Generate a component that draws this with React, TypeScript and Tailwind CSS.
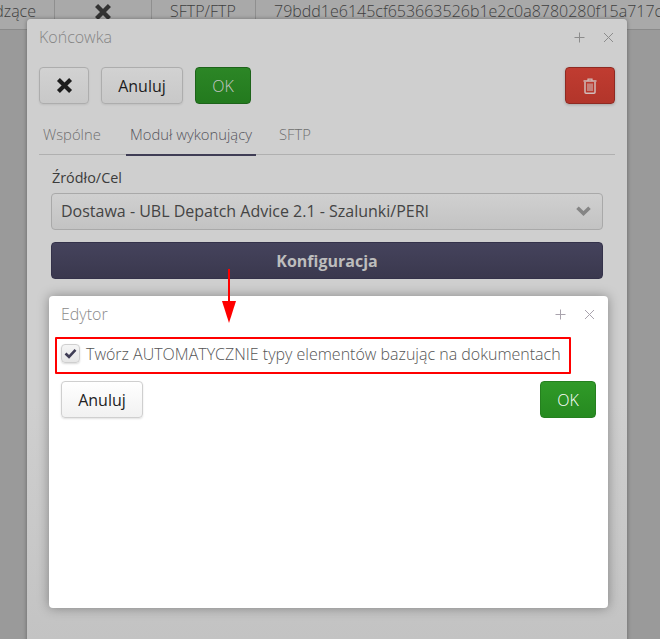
import React from "react";

const btn = "flex h-[37px] items-center justify-center rounded-[4px] border text-[16px]";

function Plus({ color }: { color: string }) {
  return (
    <svg width="11" height="11" viewBox="0 0 11 11" stroke={color} strokeWidth="1" fill="none">
      <path d="M5.5 0.5V10.5M0.5 5.5H10.5" />
    </svg>
  );
}
function Cross({ color }: { color: string }) {
  return (
    <svg width="11" height="11" viewBox="0 0 11 11" stroke={color} strokeWidth="1" fill="none">
      <path d="M1 1L10 10M10 1L1 10" />
    </svg>
  );
}
function BoldX({ size, color }: { size: number; color: string }) {
  return (
    <svg width={size} height={size} viewBox="0 0 14 14" stroke={color} strokeWidth="3.4" fill="none">
      <path d="M2 2L12 12M12 2L2 12" />
    </svg>
  );
}

export default function App() {
  return (
    <div className="relative h-[639px] w-[660px] overflow-hidden bg-[#9a9a9a] font-['Open_Sans',sans-serif]">
      <div className="flex h-[30px] overflow-hidden border-b border-[#8a8a8a] bg-[#a9a9a9] text-[16px] font-light leading-[22px] text-[#3f3f3f]">
        <div className="flex h-[29px] w-[55px] shrink-0 justify-end border-r border-[#8f8f8f] pr-[18px]">
          <span>dzące</span>
        </div>
        <div className="flex h-[29px] w-[97px] shrink-0 justify-center border-r border-[#8f8f8f] pt-[3px]">
          <BoldX size={18} color="#333" />
        </div>
        <div className="h-[29px] w-[104px] shrink-0 whitespace-nowrap border-r border-[#8f8f8f] pl-[18px]">SFTP/FTP</div>
        <div className="shrink-0 whitespace-nowrap pl-[18px]">79bdd1e6145cf653663526b1e2c0a8780280f15a717c</div>
      </div>

      <div className="absolute left-[27px] top-[19px] h-[640px] w-[600px] rounded-[4px] bg-gradient-to-b from-[#cfcfcf] from-60% to-[#c2c2c2] px-[12px] shadow-[0_0_4px_rgba(0,0,0,0.35)]">
        <div className="flex h-[36px] items-center justify-between pr-[1px]">
          <span className="text-[16px] font-light text-[#858585]">Końcowka</span>
          <div className="flex items-center gap-[18px]">
            <Plus color="#8c8c8c" />
            <Cross color="#8c8c8c" />
          </div>
        </div>

        <div className="mt-[12px] flex">
          <div className={`${btn} w-[50px] border-[#adadad] bg-gradient-to-b from-[#d2d2d2] to-[#c8c8c8] shadow-[0_1px_2px_rgba(0,0,0,0.08)]`}>
            <BoldX size={17} color="#1c1c1c" />
          </div>
          <div className={`${btn} ml-[12px] w-[82px] border-[#adadad] bg-gradient-to-b from-[#d2d2d2] to-[#c8c8c8] text-[#1c1c1c] shadow-[0_1px_2px_rgba(0,0,0,0.08)]`}>
            Anuluj
          </div>
          <div className={`${btn} ml-[12px] w-[56px] border-[#1d631a] bg-gradient-to-b from-[#2c8626] to-[#237a1e] font-light text-[#c6c6c6]`}>
            OK
          </div>
          <div className={`${btn} ml-auto w-[50px] border-[#8f2a22] bg-gradient-to-b from-[#c03c31] to-[#b2352a] shadow-[0_1px_3px_rgba(0,0,0,0.2)]`}>
            <svg width="14" height="16" viewBox="0 0 14 16" fill="none" stroke="#d0bdbb" strokeWidth="1.5">
              <path d="M0.5 3H13.5" />
              <path d="M5 3V1.2H9V3" strokeWidth="1.2" />
              <path d="M2 4V14.2C2 14.9 2.4 15.2 3 15.2H11C11.6 15.2 12 14.9 12 14.2V4" />
              <path d="M5 5.5V13M7 5.5V13M9 5.5V13" strokeWidth="1.1" />
            </svg>
          </div>
        </div>

        <div className="mt-[12px] flex h-[39px] border-b border-[#b0b0b0] text-[14.8px] font-light leading-[22px] text-[#707070]">
          <div className="flex w-[87px] items-start pl-[4px] pt-[7px]">Wspólne</div>
          <div className="-mb-px flex h-[40px] w-[130px] items-start justify-center whitespace-nowrap border-b-[2px] border-[#3f3d55] pt-[7px] text-[#55555c]">
            Moduł wykonujący
          </div>
          <div className="pl-[23px] pt-[7px]">SFTP</div>
        </div>

        <div className="px-[12px]">
          <div className="ml-[1px] mt-[13px] text-[14.4px] leading-[20px] text-[#3c3c3c]">Źródło/Cel</div>
          <div className="mt-[5px] flex h-[37px] items-center justify-between rounded-[4px] border border-[#a9a9a9] bg-gradient-to-b from-[#d0d0d0] to-[#c3c3c3] pb-[1px] pl-[9px] pr-[11px] text-[16px] text-[#444]">
            <span>Dostawa - UBL Depatch Advice 2.1 - Szalunki/PERI</span>
            <svg width="15" height="10" viewBox="0 0 15 10" fill="none" stroke="#858585" strokeWidth="3.6">
              <path d="M1.5 1.8L7.5 7.5L13.5 1.8" />
            </svg>
          </div>
          <div className="mt-[12px] flex h-[37px] items-center justify-center rounded-[4px] border border-[#34324a] bg-gradient-to-b from-[#45435c] to-[#3a384e] text-[16px] font-bold text-[#bdbdbd]">
            Konfiguracja
          </div>
        </div>

        <div className="ml-[10px] mt-[17px] h-[312px] w-[559px] rounded-[4px] bg-white px-[12px] shadow-[0_0_12px_rgba(0,0,0,0.35)]">
          <div className="flex h-[36px] items-center justify-between pr-[1px]">
            <span className="text-[16px] font-light text-[#8a8a8a]">Edytor</span>
            <div className="flex items-center gap-[18px]">
              <Plus color="#a9a3ad" />
              <Cross color="#a9a3ad" />
            </div>
          </div>
          <div className="-ml-[6px] mt-[5px] flex h-[37px] w-[516px] items-center rounded-[1px] border-[2px] border-[#ff0000] pb-[4px] pl-[4px]">
            <div className="flex h-[19px] w-[19px] items-center justify-center rounded-[4px] border border-[#cfcfcf] bg-gradient-to-b from-[#f5f5f5] to-[#e6e6e6] shadow-[0_1px_2px_rgba(0,0,0,0.15)]">
              <svg width="13" height="11" viewBox="0 0 13 11" fill="none" stroke="#3f3d55" strokeWidth="2.6">
                <path d="M1.5 5.5L5 8.8L11.5 1.8" />
              </svg>
            </div>
            <span className="ml-[6px] whitespace-nowrap text-[16px] font-light text-[#555]">
              Twórz AUTOMATYCZNIE typy elementów bazując na dokumentach
            </span>
          </div>
          <div className="mt-[7px] flex justify-between">
            <div className={`${btn} w-[82px] border-[#cfcfcf] bg-gradient-to-b from-white to-[#f1f1f1] text-[#222] shadow-[0_1px_2px_rgba(0,0,0,0.12)]`}>
              Anuluj
            </div>
            <div className={`${btn} w-[56px] border-[#25801f] bg-gradient-to-b from-[#309a28] to-[#268a20] font-light text-white`}>
              OK
            </div>
          </div>
        </div>
      </div>

      <svg className="absolute left-[220px] top-[268px]" width="18" height="56" viewBox="0 0 18 56" fill="#ff0000">
        <rect x="8" y="1" width="2" height="34" />
        <path d="M2 33H16L9 55Z" />
      </svg>
    </div>
  );
}
